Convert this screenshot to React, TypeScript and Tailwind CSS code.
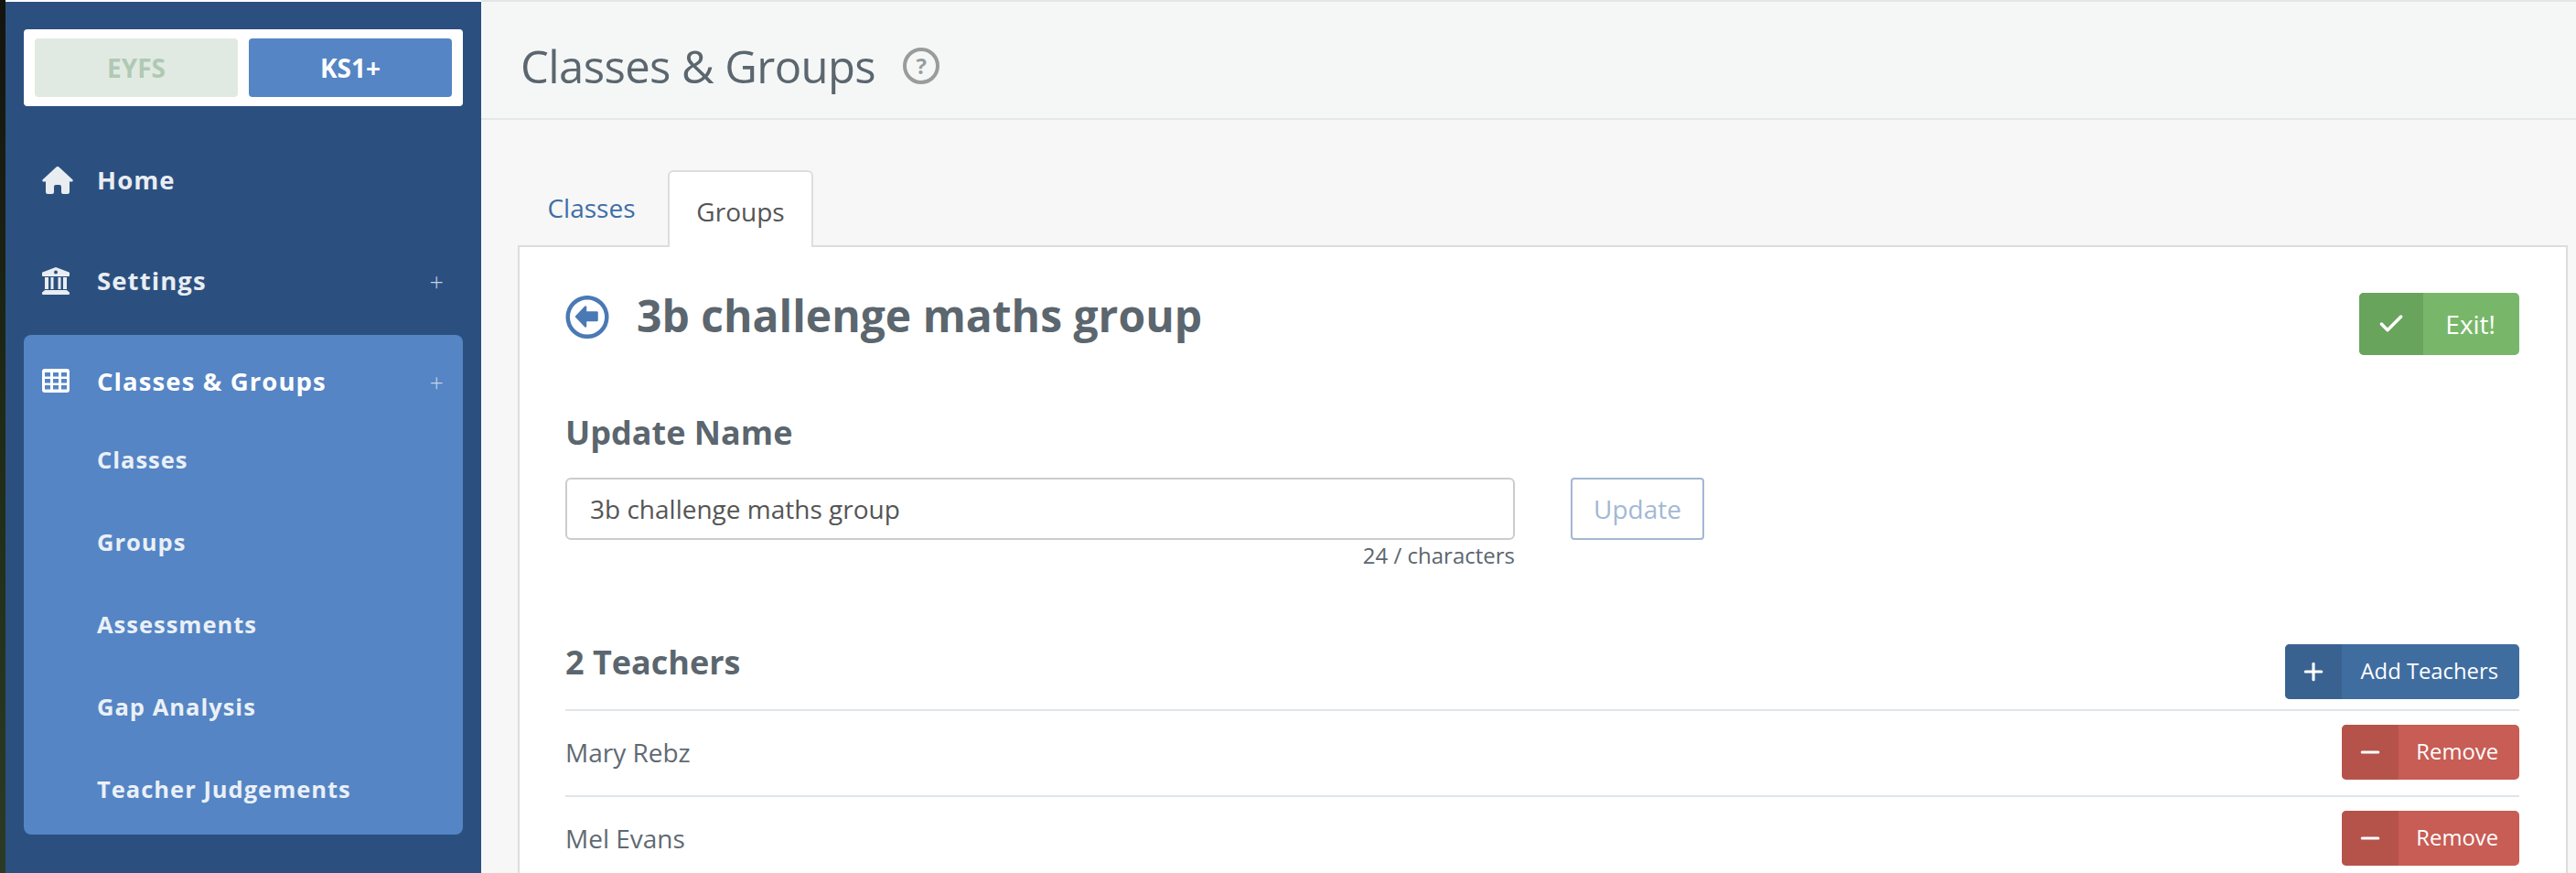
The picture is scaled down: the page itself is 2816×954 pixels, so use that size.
import { Check, Minus, Plus } from "lucide-react";
import type { ReactNode } from "react";

const subLinks = ["Classes", "Groups", "Assessments", "Gap Analysis", "Teacher Judgements"];

function HomeIcon() {
  return (
    <svg width="34" height="30" viewBox="0 0 34 30" fill="currentColor">
      <path d="M15.6.6a2 2 0 0 1 2.8 0l14.9 13.6c.9.9.3 2.3-.9 2.3H30v11a2.5 2.5 0 0 1-2.5 2.5H23a2 2 0 0 1-2-2v-6a2 2 0 0 0-2-2h-4a2 2 0 0 0-2 2v6a2 2 0 0 1-2 2H6.500A2.500 2.500 0 0 1 4 27.500v-11H1.600c-1.200 0-1.800-1.400-.9-2.300z" />
    </svg>
  );
}

function BankIcon() {
  return (
    <svg width="30" height="30" viewBox="0 0 30 30" fill="currentColor">
      <path d="M15 0 29.500 5.500a.8.800 0 0 1 .5.700V9a1 1 0 0 1-1 1H1a1 1 0 0 1-1-1V6.200c0-.3.200-.6.500-.7z" />
      <circle cx="15" cy="5.500" r="2" fill="#2b5080" />
      <path d="M3 11h4v13H3zM9.500 11h3v13h-3zM17.500 11h3v13h-3zM23 11h4v13h-4z" />
      <path d="M3 25h24l2.200 2a1 1 0 0 1 .8 1v1a1 1 0 0 1-1 1H1a1 1 0 0 1-1-1v-1a1 1 0 0 1 .8-1z" />
    </svg>
  );
}

function TableIcon() {
  return (
    <svg width="30" height="26" viewBox="0 0 30 26" className="-mt-[3px]">
      <rect width="30" height="26" rx="3" fill="currentColor" />
      {[4, 11, 18].map((y) =>
        [3, 12, 21].map((x) => <rect key={`${x}-${y}`} x={x} y={y} width="6" height="4.500" fill="#5585c4" />),
      )}
    </svg>
  );
}

function BackIcon() {
  return (
    <svg width="48" height="47" viewBox="0 0 48 47" className="shrink-0 text-[#4a7ab5]">
      <circle cx="24" cy="23.500" r="21.300" fill="none" stroke="currentColor" strokeWidth="4.500" />
      <path d="M12 23 22 12.500V18.500H34.500V27H22V33.500Z" fill="currentColor" stroke="currentColor" strokeWidth="2.500" strokeLinejoin="round" />
    </svg>
  );
}

function NavRow({ icon, label, plus, className }: { icon: ReactNode; label: string; plus?: boolean; className: string }) {
  return (
    <div className={`flex items-center pl-[20px] pr-[21px] ${className}`}>
      <span className="flex w-[60px] shrink-0">{icon}</span>
      <span className="flex-1 text-[27.500px] leading-none font-bold tracking-[1.1px]">{label}</span>
      {plus && <span className="text-[27px] leading-none font-light text-[#c4d3e6]">+</span>}
    </div>
  );
}

function IconButton({ icon, label, width, tall, tone }: { icon: ReactNode; label: string; width: string; tall?: boolean; tone: "green" | "blue" | "red" }) {
  const colours = {
    green: ["bg-[#78b76a]", "bg-[#68a45c]"],
    blue: ["bg-[#406da0]", "bg-[#3a6290]"],
    red: ["bg-[#c75d55]", "bg-[#b5534b]"],
  }[tone];
  return (
    <button className={`flex ${width} ${tall ? "h-[68px]" : "h-[60px]"} overflow-hidden rounded-[5px] ${colours[0]} text-white`}>
      <span className={`flex ${tall ? "w-[70px]" : "w-[62px]"} shrink-0 items-center justify-center ${colours[1]}`}>{icon}</span>
      <span className={`flex flex-1 items-center justify-end ${tall ? "pr-[26px] text-[28px]" : "pr-[23px] text-[23.800px]"}`}>{label}</span>
    </button>
  );
}

function TeacherRow({ name }: { name: string }) {
  return (
    <div className="flex h-[94px] items-start justify-between border-t-2 border-[#dfe5e8] pt-[15px]">
      <span className="mt-[12px] text-[28px] leading-[36px] text-[#5f6a72]">{name}</span>
      <IconButton icon={<Minus size={30} strokeWidth={2.5} />} label="Remove" width="w-[194px]" tone="red" />
    </div>
  );
}

export default function App() {
  return (
    <div className="flex h-[954px] w-[2816px] overflow-hidden bg-[#f7f7f7] font-['Open_Sans',sans-serif]">
      <div className="w-[6px] shrink-0 bg-gradient-to-b from-[#14140e] via-[#1f2b17] to-[#2b3a25]" />

      <aside className="w-[520px] shrink-0 border-t-2 border-white bg-[#2b5080]">
        <div className="mx-[20px] mt-[30px] flex h-[84px] gap-[12px] rounded-[4px] bg-white px-[12px] py-[10px]">
          <div className="flex flex-1 items-center justify-center rounded-[4px] bg-[#e0eae2] text-[28px] font-bold text-[#b0c9b3]">EYFS</div>
          <div className="flex flex-1 items-center justify-center rounded-[4px] bg-[#5585c4] text-[28px] font-bold text-white">KS1+</div>
        </div>

        <nav className="mx-[20px] mt-[26px]">
          <NavRow icon={<HomeIcon />} label="Home" className="h-[110px] text-[#e9edf2]" />
          <NavRow icon={<BankIcon />} label="Settings" plus className="h-[110px] text-[#e9edf2]" />
          <div className="mt-[4px] rounded-[8px] bg-[#5585c4] pb-[4px]">
            <NavRow icon={<TableIcon />} label="Classes & Groups" plus className="h-[92px] pt-[10px] text-white" />
            {subLinks.map((link) => (
              <div key={link} className="flex h-[90px] items-center pb-[1px] pl-[80px] text-[25.500px] font-bold tracking-[1px] text-[#eaf0f7]">
                {link}
              </div>
            ))}
          </div>
        </nav>
      </aside>

      <main className="min-w-0 flex-1 text-[#5b666e]">
        <header className="flex h-[131px] items-center gap-[30px] border-t-2 border-b-2 border-t-[#e4e6e6] border-b-[#e2e7ea] bg-[#f5f7f7] pt-[13px] pl-[43px]">
          <h1 className="text-[49px] leading-none font-normal tracking-[-0.6px]">Classes &amp; Groups</h1>
          <div className="flex h-[40px] w-[40px] items-center justify-center rounded-full border-[4px] border-[#9a9c9c] text-[24px] leading-none font-bold text-[#9a9c9c]">?</div>
        </header>

        <div className="pt-[55px] pr-[9px] pl-[40px]">
          <div className="flex h-[82px] pl-[2px]">
            <div className="flex w-[162px] items-center justify-center pr-[5px] text-[28px] text-[#3e6ea6]">Classes</div>
            <div className="relative z-10 -mb-[2px] flex w-[159px] items-center justify-center rounded-t-[6px] border-2 border-b-0 border-[#dddddd] bg-white pt-[3px] text-[28px] text-[#555555]">
              Groups
            </div>
          </div>

          <section className="h-[700px] border-2 border-[#dddddd] bg-white pt-[50px] pr-[51px] pl-[50px]">
            <div className="flex items-start justify-between">
              <div className="flex items-center gap-[30px] pt-[3px]">
                <BackIcon />
                <h2 className="-mt-[3px] text-[48px] leading-[50px] font-bold">3b challenge maths group</h2>
              </div>
              <IconButton icon={<Check size={32} strokeWidth={2.6} />} label="Exit!" width="w-[175px]" tall tone="green" />
            </div>

            <h3 className="mt-[65px] text-[36px] leading-[40px] font-bold">Update Name</h3>

            <div className="mt-[29px] flex items-start gap-[61px]">
              <div className="w-[1038px]">
                <input
                  readOnly
                  value="3b challenge maths group"
                  className="h-[68px] w-full rounded-[6px] border-2 border-[#cccccc] px-[25px] text-[28px] text-[#555555] outline-none"
                />
                <div className="mt-[2px] text-right text-[24px] leading-[30px]">24 / characters</div>
              </div>
              <button className="h-[68px] w-[146px] rounded-[4px] border-2 border-[#a3b8d3] text-[28px] text-[#a3b8d3]">Update</button>
            </div>

            <div className="mt-[82px] flex h-[71px] items-start justify-between">
              <h3 className="text-[36px] leading-[40px] font-bold">2 Teachers</h3>
              <IconButton icon={<Plus size={30} strokeWidth={2.5} />} label="Add Teachers" width="w-[256px]" tone="blue" />
            </div>

            <TeacherRow name="Mary Rebz" />
            <TeacherRow name="Mel Evans" />
          </section>
        </div>
      </main>
    </div>
  );
}
